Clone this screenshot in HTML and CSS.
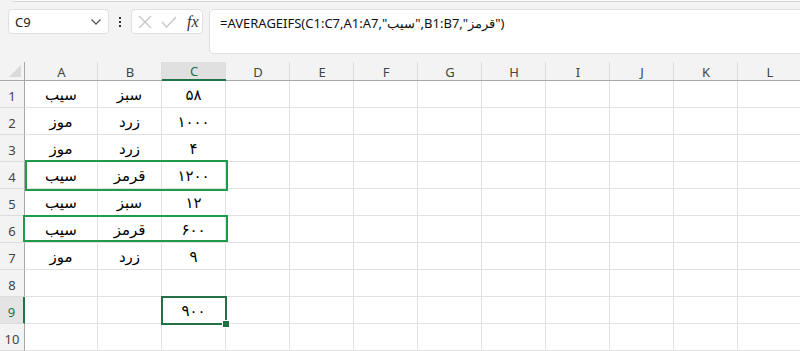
FILE: index.html
```html
<!DOCTYPE html>
<html lang="fa">
<head>
<meta charset="utf-8">
<link rel="stylesheet" href="styles.css">
</head>
<body>
<div class="app">
  <div class="topstrip"><div class="ribbon-edge"></div></div>
  <div class="fbar">
    <div class="namebox">
      <span class="ref">C9</span>
      <svg class="chev" width="12" height="8" viewBox="0 0 12 8"><path d="M1.5 1.5 L6 6 L10.5 1.5" fill="none" stroke="#555" stroke-width="1.3"/></svg>
    </div>
    <div class="dots"><span></span><span></span><span></span></div>
    <div class="fxbox">
      <svg width="14" height="14" viewBox="0 0 14 14"><path d="M1 1 L13 13 M13 1 L1 13" stroke="#c4c4c4" stroke-width="1.2" fill="none"/></svg>
      <svg width="16" height="12" viewBox="0 0 16 12"><path d="M1 6 L5.5 11 L15 1" stroke="#c4c4c4" stroke-width="1.2" fill="none"/></svg>
      <span class="fx">fx</span>
    </div>
    <div class="formula"><span dir="ltr">=AVERAGEIFS(C1:C7,A1:A7,"سیب",B1:B7,"قرمز")</span></div>
  </div>
  <div class="sheet">
    <div class="corner"><div class="tri"></div></div>
    <div class="ch">A</div><div class="ch">B</div><div class="ch sel">C</div><div class="ch">D</div><div class="ch">E</div><div class="ch">F</div><div class="ch">G</div><div class="ch">H</div><div class="ch">I</div><div class="ch">J</div><div class="ch">K</div><div class="ch">L</div>

    <div class="rh">1</div><div class="c">سیب</div><div class="c">سبز</div><div class="c">۵۸</div><div class="c"></div><div class="c"></div><div class="c"></div><div class="c"></div><div class="c"></div><div class="c"></div><div class="c"></div><div class="c"></div><div class="c"></div>
    <div class="rh">2</div><div class="c">موز</div><div class="c">زرد</div><div class="c">۱۰۰۰</div><div class="c"></div><div class="c"></div><div class="c"></div><div class="c"></div><div class="c"></div><div class="c"></div><div class="c"></div><div class="c"></div><div class="c"></div>
    <div class="rh">3</div><div class="c">موز</div><div class="c">زرد</div><div class="c">۴</div><div class="c"></div><div class="c"></div><div class="c"></div><div class="c"></div><div class="c"></div><div class="c"></div><div class="c"></div><div class="c"></div><div class="c"></div>
    <div class="rh">4</div><div class="c">سیب</div><div class="c">قرمز</div><div class="c">۱۲۰۰</div><div class="c"></div><div class="c"></div><div class="c"></div><div class="c"></div><div class="c"></div><div class="c"></div><div class="c"></div><div class="c"></div><div class="c"></div>
    <div class="rh">5</div><div class="c">سیب</div><div class="c">سبز</div><div class="c">۱۲</div><div class="c"></div><div class="c"></div><div class="c"></div><div class="c"></div><div class="c"></div><div class="c"></div><div class="c"></div><div class="c"></div><div class="c"></div>
    <div class="rh">6</div><div class="c">سیب</div><div class="c">قرمز</div><div class="c">۶۰۰</div><div class="c"></div><div class="c"></div><div class="c"></div><div class="c"></div><div class="c"></div><div class="c"></div><div class="c"></div><div class="c"></div><div class="c"></div>
    <div class="rh">7</div><div class="c">موز</div><div class="c">زرد</div><div class="c">۹</div><div class="c"></div><div class="c"></div><div class="c"></div><div class="c"></div><div class="c"></div><div class="c"></div><div class="c"></div><div class="c"></div><div class="c"></div>
    <div class="rh">8</div><div class="c"></div><div class="c"></div><div class="c"></div><div class="c"></div><div class="c"></div><div class="c"></div><div class="c"></div><div class="c"></div><div class="c"></div><div class="c"></div><div class="c"></div><div class="c"></div>
    <div class="rh sel">9</div><div class="c"></div><div class="c"></div><div class="c">۹۰۰</div><div class="c"></div><div class="c"></div><div class="c"></div><div class="c"></div><div class="c"></div><div class="c"></div><div class="c"></div><div class="c"></div><div class="c"></div>
    <div class="rh">10</div><div class="c"></div><div class="c"></div><div class="c"></div><div class="c"></div><div class="c"></div><div class="c"></div><div class="c"></div><div class="c"></div><div class="c"></div><div class="c"></div><div class="c"></div><div class="c"></div>

    <div class="mark mark1"></div>
    <div class="mark mark2"></div>
    <div class="selection"><div class="handle"></div></div>
  </div>
</div>
</body>
</html>
```
FILE: styles.css
```css
html, body {
  margin: 0;
  padding: 0;
}
body {
  width: 800px;
  height: 351px;
  overflow: hidden;
  background: #f3f3f3;
  font-family: "Noto Sans", "Open Sans", sans-serif;
}
.app {
  width: 800px;
  height: 351px;
  overflow: hidden;
  display: flex;
  flex-direction: column;
}
.topstrip {
  height: 3px;
  padding-left: 12px;
}
.ribbon-edge {
  height: 2px;
  background: #fafafa;
  border-bottom: 1px solid #d6d6d6;
  border-bottom-left-radius: 4px;
  box-sizing: border-box;
}
.fbar {
  display: flex;
  align-items: flex-start;
  padding-top: 6px;
  padding-left: 8px;
  height: 53px;
  box-sizing: border-box;
}
.namebox {
  width: 101px;
  height: 25px;
  box-sizing: border-box;
  background: #fff;
  border: 1px solid #e0e0e0;
  border-radius: 4px;
  display: flex;
  align-items: center;
  justify-content: space-between;
  padding: 0 6px 0 6px;
  font-size: 13px;
  color: #222;
}
.chev { margin-top: 1px; }
.dots {
  width: 22px;
  height: 25px;
  display: flex;
  flex-direction: column;
  align-items: center;
  justify-content: center;
  gap: 2px;
}
.dots span {
  width: 2px;
  height: 2px;
  background: #333;
}
.fxbox {
  width: 72px;
  height: 25px;
  box-sizing: border-box;
  background: #fff;
  border: 1px solid #e0e0e0;
  border-radius: 4px;
  display: flex;
  align-items: center;
  padding-left: 6px;
  gap: 9px;
}
.fx {
  font-family: "Liberation Serif", serif;
  font-style: italic;
  font-size: 16px;
  color: #333;
  margin-left: 1px;
}
.formula {
  flex: 1;
  margin-left: 6px;
  margin-right: -10px;
  height: 45px;
  box-sizing: border-box;
  background: #fff;
  border: 1px solid #e0e0e0;
  border-radius: 4px;
  padding: 5px 10px;
  font-size: 13px;
  color: #111;
  line-height: 16px;
}
.sheet {
  margin-top: 6px;
  position: relative;
  display: grid;
  grid-template-columns: 25px 73px repeat(11, 64px);
  grid-template-rows: 19px repeat(10, 27px);
  background: #fff;
}
.corner {
  background: #f3f3f3;
  border-right: 1px solid #a8a8a8;
  border-bottom: 1px solid #a8a8a8;
  position: relative;
}
.tri {
  position: absolute;
  right: 3px;
  bottom: 3px;
  width: 0;
  height: 0;
  border-left: 12px solid transparent;
  border-bottom: 12px solid #dadada;
}
.ch {
  background: #f3f3f3;
  border-bottom: 1px solid #a8a8a8;
  box-shadow: inset -1px 0 0 0 #dcdcdc;
  font-size: 13px;
  color: #444;
  display: flex;
  align-items: center;
  justify-content: center;
  padding-top: 1px;
  box-sizing: border-box;
}
.ch.sel {
  background: #e0e0e0;
  border-bottom: 2px solid #217346;
  color: #217346;
}
.rh {
  background: #f3f3f3;
  border-right: 1px solid #a8a8a8;
  border-bottom: 1px solid #dcdcdc;
  font-size: 13px;
  color: #444;
  display: flex;
  align-items: flex-end;
  justify-content: center;
  padding-bottom: 2px;
  box-sizing: border-box;
}
.rh.sel {
  background: #e4e4e4;
  border-right: 2px solid #217346;
  color: #217346;
}
.c {
  border-right: 1px solid #e1e1e1;
  border-bottom: 1px solid #e1e1e1;
  box-sizing: border-box;
  font-family: "DejaVu Sans", sans-serif;
  font-size: 15px;
  color: #000;
  display: flex;
  align-items: flex-end;
  justify-content: center;
  padding-bottom: 3px;
  direction: rtl;
}
.mark {
  position: absolute;
  border: 2px solid #1f9a4a;
  box-sizing: border-box;
}
.mark1 { left: 25px; top: 98px; width: 203px; height: 31px; }
.mark2 { left: 23px; top: 153px; width: 205px; height: 27px; }
.selection {
  position: absolute;
  left: 161px;
  top: 234px;
  width: 66px;
  height: 29px;
  border: 2px solid #217346;
  box-sizing: border-box;
}
.handle {
  position: absolute;
  right: -5px;
  bottom: -5px;
  width: 6px;
  height: 6px;
  background: #217346;
  border: 1px solid #fff;
}
```
